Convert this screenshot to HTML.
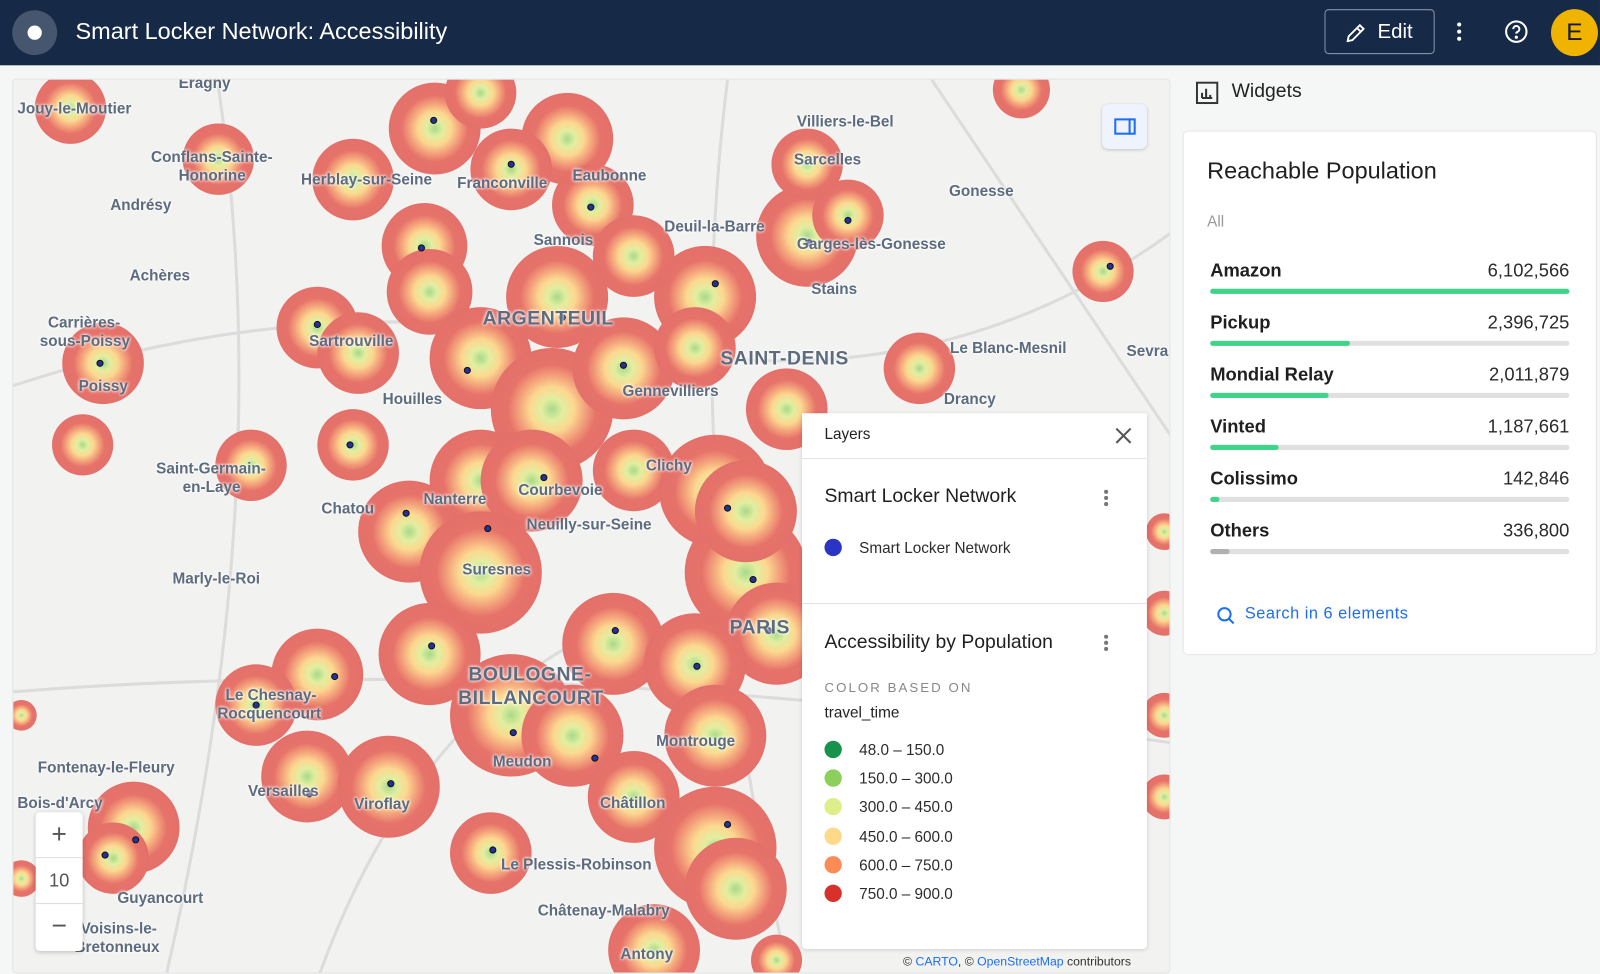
<!DOCTYPE html>
<html><head><meta charset="utf-8">
<style>
*{margin:0;padding:0;box-sizing:border-box}
body{width:1600px;height:974px;overflow:hidden;background:#f5f6f6;font-family:"Liberation Sans",sans-serif;position:relative}
#w{position:absolute;left:0;top:0;width:1568px;height:955px;transform:scale(1.0204);transform-origin:0 0}
.hdr{position:absolute;left:0;top:0;width:1568px;height:64px;background:#162a47;color:#fff}
.logo{position:absolute;left:12px;top:10px;width:44px;height:44px;border-radius:50%;background:#46566f}
.logo:after{content:"";position:absolute;left:15px;top:15px;width:14px;height:14px;border-radius:50%;background:#fff}
.title{position:absolute;left:74px;top:17px;font-size:23px}
.edit{position:absolute;left:1298px;top:9px;width:108px;height:44px;border:1px solid #8592a6;border-radius:4px;font-size:20px}
.edit span{position:absolute;left:51px;top:10px}
.av{position:absolute;left:1520px;top:9px;width:46px;height:46px;border-radius:50%;background:#f0b400;color:#1a1a1a;font-size:24px;text-align:center;line-height:46px}
.map{position:absolute;left:12px;top:77px;width:1135px;height:877px;background:#f2f2f1;overflow:hidden;border-radius:4px;border:1px solid #e4e4e4}
.lbl{position:absolute;font-size:15px;color:#5d6b7e;font-weight:bold;white-space:nowrap;text-shadow:0 0 3px #fff,0 0 3px #fff}
.big{font-size:19px;letter-spacing:0.5px}
.panel{position:absolute;background:#fff;border-radius:4px;box-shadow:0 1px 4px rgba(0,0,0,.15)}
.dot3{position:absolute;width:4px;height:4px;border-radius:50%;background:#777;box-shadow:0 6px 0 #777,0 12px 0 #777}
.lg{position:absolute;left:22px;font-size:15px;color:#2c2c2c}
.lg i{display:inline-block;width:17px;height:17px;border-radius:50%;vertical-align:-3px;margin-right:17px}
.row{position:absolute;left:26px;width:352px}
.row b{font-size:18px;color:#1f1f1f}
.row span{position:absolute;right:0;top:0;font-size:18px;color:#2b2b2b}
.bar{position:absolute;left:0;top:28px;width:352px;height:5px;background:#e0e0e0;border-radius:3px}
.bar div{height:5px;background:#3ed58b;border-radius:3px}
</style></head><body><div id="w">
<div class="hdr">
 <div class="logo"></div>
 <div class="title">Smart Locker Network: Accessibility</div>
 <div class="edit"><svg style="position:absolute;left:19px;top:11px" width="22" height="22" viewBox="0 0 24 24" fill="none" stroke="#fff" stroke-width="2"><path d="M3 21l1-5L16 4l4 4L8 20z M13 7l4 4"/></svg><span>Edit</span></div>
 <div style="position:absolute;left:1428px;top:22px;width:4px;height:4px;border-radius:50%;background:#fff;box-shadow:0 7px 0 #fff,0 14px 0 #fff"></div>
 <svg style="position:absolute;left:1474px;top:19px" width="24" height="24" viewBox="0 0 24 24" fill="none" stroke="#fff" stroke-width="2"><circle cx="12" cy="12" r="10"/><path d="M9 9.5a3 3 0 1 1 4 2.8c-.8.4-1 1-1 1.7"/><circle cx="12" cy="17.5" r=".6" fill="#fff"/></svg>
 <div class="av">E</div>
</div>

<div class="map">
<svg width="1135" height="877" style="position:absolute;left:0;top:0">
<defs><radialGradient id="g"><stop offset="0" stop-color="#a8d98a"/><stop offset=".18" stop-color="#e2eea0"/><stop offset=".36" stop-color="#fcd890"/><stop offset=".55" stop-color="#f3a07a"/><stop offset=".72" stop-color="#e6736a"/><stop offset="1" stop-color="#e4706a"/></radialGradient></defs>
<g stroke="#dcdcdc" stroke-width="3" fill="none">
<path d="M0 300 Q300 200 600 260 T1135 150"/><path d="M200 0 Q260 400 150 877"/><path d="M700 0 Q650 400 760 877"/><path d="M0 600 Q500 560 1135 650"/><path d="M900 0 L1135 350"/><path d="M300 877 Q400 600 620 520"/>
</g>
<g fill="url(#g)">
<circle cx="56" cy="28" r="35"/><circle cx="201" cy="78" r="35"/><circle cx="333" cy="98" r="40"/><circle cx="413" cy="48" r="45"/><circle cx="458" cy="13" r="35"/><circle cx="543" cy="58" r="45"/><circle cx="488" cy="88" r="40"/><circle cx="568" cy="123" r="40"/><circle cx="403" cy="163" r="42"/><circle cx="408" cy="208" r="42"/><circle cx="298" cy="243" r="40"/><circle cx="338" cy="268" r="40"/><circle cx="88" cy="278" r="40"/><circle cx="68" cy="358" r="30"/><circle cx="233" cy="378" r="35"/><circle cx="333" cy="358" r="35"/><circle cx="458" cy="273" r="50"/><circle cx="533" cy="213" r="50"/><circle cx="528" cy="323" r="60"/><circle cx="598" cy="283" r="50"/><circle cx="608" cy="173" r="40"/><circle cx="678" cy="213" r="50"/><circle cx="668" cy="263" r="40"/><circle cx="778" cy="153" r="50"/><circle cx="818" cy="133" r="35"/><circle cx="778" cy="83" r="35"/><circle cx="988" cy="10" r="28"/><circle cx="1068" cy="188" r="30"/><circle cx="888" cy="283" r="35"/><circle cx="758" cy="323" r="40"/><circle cx="458" cy="393" r="50"/><circle cx="508" cy="393" r="50"/><circle cx="388" cy="443" r="50"/><circle cx="458" cy="483" r="60"/><circle cx="608" cy="383" r="40"/><circle cx="688" cy="403" r="55"/><circle cx="718" cy="483" r="60"/><circle cx="748" cy="543" r="50"/><circle cx="408" cy="563" r="50"/><circle cx="488" cy="623" r="60"/><circle cx="588" cy="553" r="50"/><circle cx="548" cy="643" r="50"/><circle cx="668" cy="573" r="50"/><circle cx="688" cy="643" r="50"/><circle cx="608" cy="703" r="45"/><circle cx="688" cy="753" r="60"/><circle cx="708" cy="793" r="50"/><circle cx="298" cy="583" r="45"/><circle cx="238" cy="613" r="40"/><circle cx="288" cy="683" r="45"/><circle cx="368" cy="693" r="50"/><circle cx="118" cy="733" r="45"/><circle cx="98" cy="763" r="35"/><circle cx="468" cy="758" r="40"/><circle cx="628" cy="853" r="45"/><circle cx="748" cy="863" r="25"/><circle cx="1128" cy="443" r="18"/><circle cx="1128" cy="523" r="22"/><circle cx="1128" cy="623" r="22"/><circle cx="1128" cy="703" r="22"/><circle cx="8" cy="623" r="15"/><circle cx="8" cy="783" r="18"/><circle cx="718" cy="423" r="50"/>
</g>
<g fill="#25309a" stroke="#111" stroke-width="1">
<circle cx="412" cy="40" r="3"/><circle cx="488" cy="83" r="3"/><circle cx="566" cy="125" r="3"/><circle cx="400" cy="165" r="3"/><circle cx="298" cy="240" r="3"/><circle cx="85" cy="278" r="3"/><circle cx="330" cy="358" r="3"/><circle cx="445" cy="285" r="3"/><circle cx="538" cy="233" r="3"/><circle cx="598" cy="280" r="3"/><circle cx="688" cy="200" r="3"/><circle cx="780" cy="160" r="3"/><circle cx="818" cy="138" r="3"/><circle cx="1075" cy="183" r="3"/><circle cx="385" cy="425" r="3"/><circle cx="465" cy="440" r="3"/><circle cx="520" cy="390" r="3"/><circle cx="700" cy="420" r="3"/><circle cx="725" cy="490" r="3"/><circle cx="740" cy="540" r="3"/><circle cx="410" cy="555" r="3"/><circle cx="490" cy="640" r="3"/><circle cx="570" cy="665" r="3"/><circle cx="590" cy="540" r="3"/><circle cx="670" cy="575" r="3"/><circle cx="700" cy="730" r="3"/><circle cx="290" cy="700" r="3"/><circle cx="370" cy="690" r="3"/><circle cx="120" cy="745" r="3"/><circle cx="90" cy="760" r="3"/><circle cx="470" cy="755" r="3"/><circle cx="238" cy="613" r="3"/><circle cx="315" cy="585" r="3"/>
</g>
</svg>
<div class="lbl" style="left:162px;top:-5px">Eragny</div>
<div class="lbl" style="left:4px;top:20px">Jouy-le-Moutier</div>
<div class="lbl" style="left:135px;top:68px">Conflans-Sainte-</div>
<div class="lbl" style="left:162px;top:86px">Honorine</div>
<div class="lbl" style="left:282px;top:90px">Herblay-sur-Seine</div>
<div class="lbl" style="left:435px;top:93px">Franconville</div>
<div class="lbl" style="left:548px;top:86px">Eaubonne</div>
<div class="lbl" style="left:95px;top:115px">Andrésy</div>
<div class="lbl" style="left:768px;top:33px">Villiers-le-Bel</div>
<div class="lbl" style="left:765px;top:70px">Sarcelles</div>
<div class="lbl" style="left:917px;top:101px">Gonesse</div>
<div class="lbl" style="left:638px;top:136px">Deuil-la-Barre</div>
<div class="lbl" style="left:768px;top:153px">Garges-lès-Gonesse</div>
<div class="lbl" style="left:510px;top:149px">Sannois</div>
<div class="lbl" style="left:114px;top:184px">Achères</div>
<div class="lbl" style="left:782px;top:197px">Stains</div>
<div class="lbl" style="left:34px;top:230px">Carrières-</div>
<div class="lbl" style="left:26px;top:248px">sous-Poissy</div>
<div class="lbl" style="left:290px;top:248px">Sartrouville</div>
<div class="lbl big" style="left:460px;top:224px">ARGENTEUIL</div>
<div class="lbl big" style="left:693px;top:263px">SAINT-DENIS</div>
<div class="lbl" style="left:918px;top:255px">Le Blanc-Mesnil</div>
<div class="lbl" style="left:1091px;top:258px">Sevra</div>
<div class="lbl" style="left:64px;top:292px">Poissy</div>
<div class="lbl" style="left:597px;top:297px">Gennevilliers</div>
<div class="lbl" style="left:362px;top:305px">Houilles</div>
<div class="lbl" style="left:912px;top:305px">Drancy</div>
<div class="lbl" style="left:140px;top:373px">Saint-Germain-</div>
<div class="lbl" style="left:166px;top:391px">en-Laye</div>
<div class="lbl" style="left:620px;top:370px">Clichy</div>
<div class="lbl" style="left:495px;top:394px">Courbevoie</div>
<div class="lbl" style="left:402px;top:403px">Nanterre</div>
<div class="lbl" style="left:302px;top:412px">Chatou</div>
<div class="lbl" style="left:503px;top:428px">Neuilly-sur-Seine</div>
<div class="lbl" style="left:440px;top:472px">Suresnes</div>
<div class="lbl" style="left:156px;top:481px">Marly-le-Roi</div>
<div class="lbl big" style="left:702px;top:527px">PARIS</div>
<div class="lbl big" style="left:446px;top:573px">BOULOGNE-</div>
<div class="lbl big" style="left:436px;top:596px">BILLANCOURT</div>
<div class="lbl" style="left:208px;top:595px">Le Chesnay-</div>
<div class="lbl" style="left:200px;top:613px">Rocquencourt</div>
<div class="lbl" style="left:630px;top:640px">Montrouge</div>
<div class="lbl" style="left:470px;top:660px">Meudon</div>
<div class="lbl" style="left:24px;top:666px">Fontenay-le-Fleury</div>
<div class="lbl" style="left:230px;top:689px">Versailles</div>
<div class="lbl" style="left:334px;top:702px">Viroflay</div>
<div class="lbl" style="left:4px;top:701px">Bois-d'Arcy</div>
<div class="lbl" style="left:575px;top:701px">Châtillon</div>
<div class="lbl" style="left:478px;top:761px">Le Plessis-Robinson</div>
<div class="lbl" style="left:102px;top:794px">Guyancourt</div>
<div class="lbl" style="left:514px;top:806px">Châtenay-Malabry</div>
<div class="lbl" style="left:66px;top:824px">Voisins-le-</div>
<div class="lbl" style="left:60px;top:842px">Bretonneux</div>
<div class="lbl" style="left:595px;top:849px">Antony</div>
<div style="position:absolute;left:1067px;top:24px;width:44px;height:44px;background:#eef3fd;border-radius:6px;box-shadow:0 1px 3px rgba(0,0,0,.2)"><div style="position:absolute;left:12px;top:14px;width:21px;height:16px;border:2px solid #1c6ef2"></div><div style="position:absolute;left:26px;top:14px;width:2px;height:16px;background:#1c6ef2"></div></div>
<div style="position:absolute;left:22px;top:718px;width:46px;height:136px;background:#fff;border-radius:4px;box-shadow:0 1px 4px rgba(0,0,0,.2);color:#555;text-align:center">
 <div style="height:45px;font-size:26px;line-height:42px;border-bottom:1px solid #ddd">+</div>
 <div style="height:45px;font-size:18px;line-height:45px;border-bottom:1px solid #ddd">10</div>
 <div style="height:45px;font-size:26px;line-height:42px">−</div>
</div>
<div style="position:absolute;left:872px;top:857px;font-size:12px;color:#333">© <span style="color:#1c6ef2">CARTO</span>, © <span style="color:#1c6ef2">OpenStreetMap</span> contributors</div>
</div>

<div class="panel" style="left:786px;top:405px;width:338px;height:525px;border-radius:0 0 4px 4px">
 <div style="position:absolute;left:22px;top:12px;font-size:15px;color:#222">Layers</div>
 <svg style="position:absolute;left:307px;top:14px" width="16" height="16"><path d="M1 1L15 15M15 1L1 15" stroke="#555" stroke-width="2"/></svg>
 <div style="position:absolute;left:0;top:44px;width:338px;height:1px;background:#e2e2e2"></div>
 <div style="position:absolute;left:22px;top:71px;font-size:19px;color:#1f1f1f">Smart Locker Network</div>
 <div class="dot3" style="left:296px;top:75px"></div>
 <div class="lg" style="top:123px"><i style="background:#2a35c4"></i>Smart Locker Network</div>
 <div style="position:absolute;left:0;top:186px;width:338px;height:1px;background:#e2e2e2"></div>
 <div style="position:absolute;left:22px;top:214px;font-size:19px;color:#1f1f1f">Accessibility by Population</div>
 <div class="dot3" style="left:296px;top:217px"></div>
 <div style="position:absolute;left:22px;top:261px;font-size:13px;color:#888;letter-spacing:2px">COLOR BASED ON</div>
 <div style="position:absolute;left:22px;top:285px;font-size:15px;color:#222">travel_time</div>
 <div class="lg" style="top:321px"><i style="background:#17924a"></i>48.0 – 150.0</div>
 <div class="lg" style="top:349px"><i style="background:#8ccf5b"></i>150.0 – 300.0</div>
 <div class="lg" style="top:377px"><i style="background:#dcef8a"></i>300.0 – 450.0</div>
 <div class="lg" style="top:406px"><i style="background:#fdd98a"></i>450.0 – 600.0</div>
 <div class="lg" style="top:434px"><i style="background:#fb8c55"></i>600.0 – 750.0</div>
 <div class="lg" style="top:462px"><i style="background:#d8302a"></i>750.0 – 900.0</div>
</div>

<svg style="position:absolute;left:1172px;top:80px" width="22" height="22" viewBox="0 0 22 22" fill="none" stroke="#333" stroke-width="2"><rect x="1" y="1" width="20" height="20"/><path d="M6 16V11M10 16V7M14 16v-3M6 16h10"/></svg>
<div style="position:absolute;left:1207px;top:79px;font-size:19px;color:#222">Widgets</div>
<div class="panel" style="left:1160px;top:129px;width:404px;height:512px;box-shadow:0 0 0 1px #e6e6e6">
 <div style="position:absolute;left:23px;top:25px;font-size:23px;color:#1f1f1f">Reachable Population</div>
 <div style="position:absolute;left:23px;top:80px;font-size:15px;color:#999">All</div>
 <div class="row" style="top:126px"><b>Amazon</b><span>6,102,566</span><div class="bar"><div style="width:100%"></div></div></div>
 <div class="row" style="top:177px"><b>Pickup</b><span>2,396,725</span><div class="bar"><div style="width:39%"></div></div></div>
 <div class="row" style="top:228px"><b>Mondial Relay</b><span>2,011,879</span><div class="bar"><div style="width:33%"></div></div></div>
 <div class="row" style="top:279px"><b>Vinted</b><span>1,187,661</span><div class="bar"><div style="width:19%"></div></div></div>
 <div class="row" style="top:330px"><b>Colissimo</b><span>142,846</span><div class="bar"><div style="width:2.5%"></div></div></div>
 <div class="row" style="top:381px"><b>Others</b><span>336,800</span><div class="bar"><div style="width:5.5%;background:#b0b0b0"></div></div></div>
 <svg style="position:absolute;left:32px;top:465px" width="18" height="18" viewBox="0 0 18 18" fill="none" stroke="#1c6ef2" stroke-width="2"><circle cx="8" cy="8" r="6"/><path d="M12.5 12.5L17 17"/></svg>
 <div style="position:absolute;left:60px;top:464px;font-size:16px;color:#1c6ef2;letter-spacing:.5px">Search in 6 elements</div>
</div>
</div></body></html>
